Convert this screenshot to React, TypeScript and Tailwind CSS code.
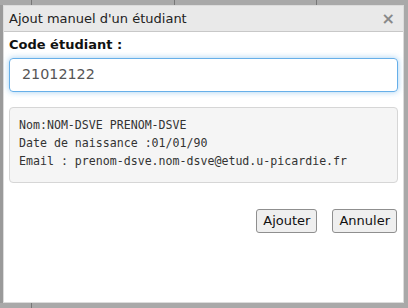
export default function App() {
  const sans = { fontFamily: '"DejaVu Sans", Verdana, sans-serif' };
  return (
    <div className="w-[408px] h-[308px] bg-[#a9a9a9] flex flex-col overflow-hidden" style={sans}>
      <div className="h-[5px] flex shrink-0">
        <div className="w-[32px] border-r border-[#777]" />
        <div className="w-[143px] border-r border-[#777]" />
        <div className="w-[142px] border-r border-[#777]" />
      </div>
      <div className="flex flex-1 min-h-0">
        <div className="w-[3px] bg-[#9a9a9a]" />
        <div className="w-[401px] bg-white border border-[#dcdcdc] flex flex-col">
          <div className="h-[26px] bg-[#e9e9e9] border-b border-[#c8c8c8] flex items-center justify-between pl-[5px] pr-[8px]">
            <span className="text-[13px] text-[#222]">Ajout manuel d'un étudiant</span>
            <span className="text-[16px] font-bold text-[#888] leading-none">×</span>
          </div>
          <div className="px-[5px] pt-[4px]">
            <div className="text-[13px] font-bold text-[#111] leading-[18px]">Code étudiant :</div>
            <div className="mt-[4px] h-[34px] border border-[#66afe9] rounded-[4px] shadow-[0_0_6px_rgba(102,175,233,0.6)] flex items-center pl-[12px] text-[14.3px] text-[#555]">
              21012122
            </div>
            <div
              className="mt-[15px] h-[76px] bg-[#f5f5f5] border border-[#d6d6d6] rounded-[4px] pl-[9px] pt-[8px] text-[11.6px] leading-[18px] text-[#333]"
              style={{ fontFamily: '"DejaVu Sans Mono", "Liberation Mono", monospace' }}
            >
              <div>Nom:NOM-DSVE PRENOM-DSVE</div>
              <div>Date de naissance :01/01/90</div>
              <div>Email : prenom-dsve.nom-dsve@etud.u-picardie.fr</div>
            </div>
            <div className="mt-[26px] flex justify-end gap-[15px] pr-[1px]">
              <button className="h-[24px] px-[6px] bg-[#efefef] border border-[#8f8f8f] rounded-[3px] text-[13px] text-[#111]">
                Ajouter
              </button>
              <button className="h-[24px] px-[6px] bg-[#efefef] border border-[#8f8f8f] rounded-[3px] text-[13px] text-[#111]">
                Annuler
              </button>
            </div>
          </div>
        </div>
        <div className="w-[4px] bg-[#a9a9a9]" />
      </div>
      <div className="h-[5px] flex shrink-0">
        <div className="w-[32px] border-r border-[#777]" />
      </div>
    </div>
  );
}
